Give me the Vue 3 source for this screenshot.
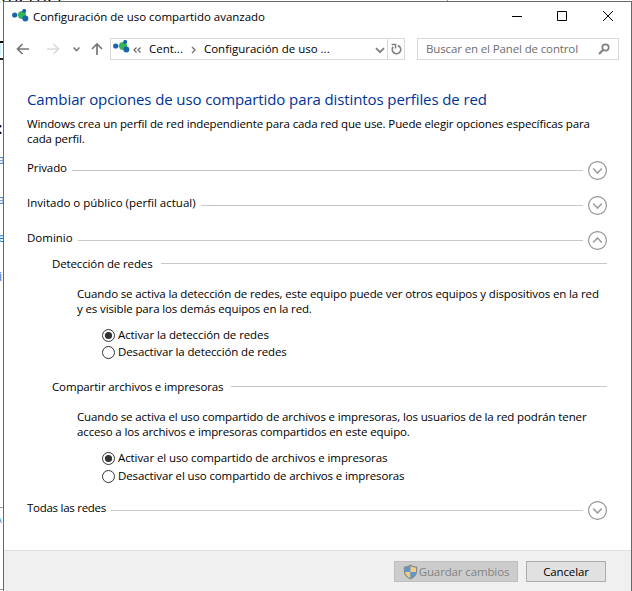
<script setup>
import { ref } from 'vue'

const groups = ref([
  {
    title: 'Detección de redes',
    key: 'discovery',
    lines: [
      'Cuando se activa la detección de redes, este equipo puede ver otros equipos y dispositivos en la red',
      'y es visible para los demás equipos en la red.',
    ],
    options: ['Activar la detección de redes', 'Desactivar la detección de redes'],
    selected: 0,
  },
  {
    title: 'Compartir archivos e impresoras',
    key: 'sharing',
    lines: [
      'Cuando se activa el uso compartido de archivos e impresoras, los usuarios de la red podrán tener',
      'acceso a los archivos e impresoras compartidos en este equipo.',
    ],
    options: [
      'Activar el uso compartido de archivos e impresoras',
      'Desactivar el uso compartido de archivos e impresoras',
    ],
    selected: 0,
  },
])
const profiles = [
  { name: 'Privado', key: 'private', open: false },
  { name: 'Invitado o público (perfil actual)', key: 'guest', open: false },
  { name: 'Dominio', key: 'domain', open: true },
  { name: 'Todas las redes', key: 'all', open: false },
]
</script>

<template>
  <div class="desktop">
    <div class="behind" aria-hidden="true">
      <span class="frag frag-title">Ethernet</span>
      <span class="frag frag-t">T</span>
      <span class="frag frag-dots">:</span>
      <span class="frag link l1">a</span>
      <span class="frag link l2">a</span>
      <span class="frag link l3">e</span>
      <span class="frag link l4">in</span>
      <span class="frag link l5">A</span>
      <i class="tick k1"></i><i class="tick k2"></i><i class="tick k3"></i><i class="tick k4"></i>
    </div>
    <div class="window">
      <header class="titlebar">
        <svg class="app-icon" width="17" height="14" viewBox="0 0 17 14">
          <path d="M3 6h7M10 6l2-4M10 7l3 4" stroke="#9dbfd8" stroke-width="1" />
          <circle cx="2.7" cy="6" r="2.6" fill="#1c63ae" />
          <circle cx="10" cy="6" r="4" fill="#35b558" />
          <circle cx="12.2" cy="1.9" r="2" fill="#1c63ae" />
          <circle cx="13.3" cy="9.6" r="3" fill="#1c63ae" />
        </svg>
        <span class="caption">Configuración de uso compartido avanzado</span>
        <svg class="controls" width="100" height="12" viewBox="0 0 100 12" fill="none" stroke="#000">
          <path d="M0 6.5h10" />
          <path d="M45.500 1.500h9v9h-9z" />
          <path d="M91 1l10 10M101 1L91 11" />
        </svg>
      </header>

      <nav class="toolbar">
        <svg class="arrows" width="90" height="14" viewBox="0 0 90 14" fill="none" stroke-width="1.700">
          <path d="M13 7H2M6.500 2L1.500 7l5 5" stroke="#777" />
          <path d="M31 7h11M37.500 2l5 5-5 5" stroke="#dcdcdc" />
          <path d="M57.500 5.500l3 3 3-3" stroke="#7a7a7a" stroke-width="1.600" />
          <path d="M81 13V2M76 7l5-5 5 5" stroke="#777" />
        </svg>
        <div class="address">
          <svg class="addr-icon" width="17" height="14" viewBox="0 0 17 14">
            <path d="M3 6h7M10 6l2-4M10 7l3 4" stroke="#9dbfd8" stroke-width="1" />
            <circle cx="2.7" cy="6" r="2.6" fill="#1c63ae" />
            <circle cx="10" cy="6" r="4" fill="#35b558" />
            <circle cx="12.2" cy="1.900" r="2" fill="#1c63ae" />
            <circle cx="13.3" cy="9.600" r="3" fill="#1c63ae" />
          </svg>
          <svg class="laquo" width="9" height="6" viewBox="0 0 9 6" fill="none" stroke="#666" stroke-width="1.200">
            <path d="M3.500.5L1 3l2.500 2.500M7.500.5L5 3l2.500 2.500" />
          </svg>
          <span class="crumb">Cent...</span>
          <svg class="raquo" width="5" height="8" viewBox="0 0 5 8" fill="none" stroke="#777" stroke-width="1.400">
            <path d="M1 1l3 3-3 3" />
          </svg>
          <span class="crumb last">Configuración de uso ...</span>
          <svg class="drop" width="10" height="7" viewBox="0 0 10 7" fill="none" stroke="#808080" stroke-width="1.900">
            <path d="M1 1.200l4 4 4-4" />
          </svg>
          <span class="refresh">
            <svg width="11" height="12" viewBox="0 0 11 12" fill="none" stroke="#808080" stroke-width="1.700">
              <path d="M2.200 3.900A4.200 4.200 0 1 0 8.600 3.700L6.800 2.500" />
              <path d="M.6 1.500H4.600V5.500" stroke-width="1.500" />
            </svg>
          </span>
        </div>
        <div class="search">
          <span>Buscar en el Panel de control</span>
          <svg width="12" height="12" viewBox="0 0 12 12" fill="none" stroke="#808080">
            <circle cx="7.500" cy="4.500" r="3.200" stroke-width="1.700" />
            <path d="M5.200 6.800L1 11" stroke-width="2" />
          </svg>
        </div>
      </nav>

      <main>
        <h1>Cambiar opciones de uso compartido para distintos perfiles de red</h1>
        <p class="intro">
          Windows crea un perfil de red independiente para cada red que use. Puede elegir opciones específicas para<br />cada perfil.
        </p>
        <section v-for="p in profiles" :key="p.key" :class="p.key">
          <div class="profile">
            <span class="name">{{ p.name }}</span>
            <i class="rule"></i>
            <svg width="19" height="19" viewBox="0 0 19 19" fill="none">
              <circle cx="9.500" cy="9.500" r="8.900" stroke="#8f8f8f" stroke-width="1.100" />
              <path :d="p.open ? 'M5.200 11.500l4.300-4.500 4.300 4.500' : 'M5.200 7.500l4.300 4.500 4.300-4.500'" stroke="#a0a0a0" stroke-width="1.700" />
            </svg>
          </div>
          <template v-if="p.open">
            <div v-for="g in groups" :key="g.key" class="group" :class="g.key">
              <div class="group-head"><span>{{ g.title }}</span><i class="rule"></i></div>
              <p class="desc"><span v-for="(l, n) in g.lines" :key="n" class="line">{{ l }}</span></p>
              <div class="options">
                <div v-for="(o, i) in g.options" :key="o" class="option" @click="g.selected = i">
                  <svg width="13" height="13" viewBox="0 0 13 13">
                    <circle cx="6.500" cy="6.500" r="6" fill="#fff" stroke="#333" />
                    <circle v-if="g.selected === i" cx="6.500" cy="6.500" r="3.600" fill="#333" />
                  </svg>
                  <span>{{ o }}</span>
                </div>
              </div>
            </div>
          </template>
        </section>
      </main>

      <footer>
        <div class="btn save">
          <svg width="15" height="16" viewBox="0 0 15 16">
            <path d="M7.500.5C5.500 2 3 2.600.8 2.600v4.600c0 3.600 2.800 6.400 6.700 8.300 3.900-1.900 6.700-4.700 6.700-8.300V2.600C12 2.600 9.500 2 7.500.5z" fill="#898d90" />
            <path d="M7.500 2C6 3 4 3.600 2 3.700V8h5.500z" fill="#5b98d2" />
            <path d="M7.500 2C9 3 11 3.600 13 3.700V8H7.500z" fill="#f0cd83" />
            <path d="M2 8h5.500v6.200C4.500 12.600 2.400 10.600 2 8z" fill="#f0cd83" />
            <path d="M13 8H7.500v6.200C10.500 12.600 12.600 10.600 13 8z" fill="#5b98d2" />
          </svg>
          <span>Guardar cambios</span>
        </div>
        <div class="btn cancel"><span>Cancelar</span></div>
      </footer>
    </div>
  </div>
</template>

<style>
body { background: #fff; overflow: hidden; }
</style>
<style scoped>
* { box-sizing: border-box; }
.desktop { position: relative; width: 632px; height: 591px; padding: 1px 0 0 3px; overflow: hidden; font: 11.5px/15px "Open Sans", "Noto Sans", sans-serif; letter-spacing: -0.13px; color: #000; white-space: nowrap; }
.behind { position: absolute; inset: 0; }
.frag { position: absolute; line-height: 20px; letter-spacing: 0; }
.frag-title { left: -9px; top: -14px; font-size: 18px; }
.frag-t { left: -7px; top: 38px; font-size: 20px; font-weight: 600; }
.frag-dots { left: -2px; top: 118px; font-size: 16px; font-weight: 600; }
.link { color: #1a78c8; font-size: 12px; }
.l1 { left: -2px; top: 150px; }
.l2 { left: -2px; top: 190px; }
.l3 { left: -2px; top: 228px; }
.l4 { left: -1px; top: 267px; }
.l5 { left: -4px; top: 510px; font-size: 9px; }
.tick { position: absolute; background: #999; }
.k1 { left: 0; top: 507px; width: 3px; height: 1px; }
.k2 { left: 0; top: 589px; width: 3px; height: 1px; }
.k3 { left: 447px; top: 0; width: 1px; height: 1px; }
.k4 { left: 0; top: 58px; width: 3px; height: 2px; background: #222; }
.window { position: relative; display: flex; flex-direction: column; width: 629px; height: 590px; background: #fff; border: 1px solid #686868; border-bottom: 0; }
.titlebar { display: flex; height: 30px; padding-left: 8px; align-items: flex-start; }
.app-icon { margin-top: 7px; flex: none; }
.caption { margin: 7px 0 0 4px; letter-spacing: -0.03px; flex: 1; }
.controls { margin: 8px 19px 0 0; overflow: visible; }
.toolbar { display: flex; height: 34px; align-items: center; padding-left: 12px; }
.arrows { flex: none; margin-right: 4px; }
.address { display: flex; align-items: center; width: 295px; height: 22px; border: 1px solid #d9d9d9; padding-left: 2px; }
.addr-icon { margin-top: -4px; }
.laquo { margin: 1px 0 0 3px; }
.crumb { margin: -2px 0 0 7px; letter-spacing: 0; }
.raquo { margin: 1px 0 0 8px; }
.crumb.last { margin-left: 8px; }
.drop { margin-left: auto; margin-right: 2px; margin-top: 3px; }
.refresh { width: 17px; height: 20px; border-left: 1px solid #d9d9d9; display: flex; align-items: center; justify-content: center; }
.search { display: flex; align-items: center; justify-content: space-between; width: 202px; height: 22px; margin-left: 12px; padding: 0 8px; border: 1px solid #d9d9d9; color: #6d6d6d; }
.search span { margin-top: -2px; }
main { height: 484px; padding: 23px 24px 0 23px; }
h1 { margin: 0; font-size: 15px; line-height: 22px; font-weight: 400; color: #003399; letter-spacing: -0.1px; position: relative; top: -1px; }
p { margin: 0; }
.intro { margin-top: 5px; }
section.private { margin-top: 7px; }
.profile { display: flex; height: 35px; align-items: center; }
.profile .name { margin-top: -7px; letter-spacing: 0; }
.rule { flex: 1; height: 1px; background: #c8c8c8; }
.profile .rule { margin: 0 5px 0 5px; }
.profile svg { flex: none; }
.all .name { letter-spacing: -0.27px; }
.private .name { letter-spacing: -0.1px; }
.group { padding-left: 25px; }
.group-head { display: flex; height: 11px; align-items: center; }
.group-head .rule { margin-left: 8px; }
.desc { margin-top: 17px; padding-left: 25px; }
.line { display: block; }
.options { padding: 11px 0 0 50px; }
.sharing .options { padding-top: 10.5px; }
.option { display: flex; height: 17px; align-items: center; }
.option span { margin: -2px 0 0 3px; }
.option:first-child { letter-spacing: -0.09px; }
.discovery { height: 123px; }
.sharing .option { height: 18px; }
.sharing { height: 112px; }
footer { display: flex; justify-content: flex-end; gap: 8px; height: 41px; padding: 10px 25px 0 0; background: #f0f0f0; border-top: 1px solid #dfdfdf; }
.btn { display: flex; align-items: center; justify-content: center; height: 21px; border: 1px solid #adadad; background: #e1e1e1; }
.save { width: 124px; background: #ccc; border-color: #bfbfbf; color: #838383; }
.save svg { margin-right: 1px; }
.cancel { width: 80px; }
</style>
